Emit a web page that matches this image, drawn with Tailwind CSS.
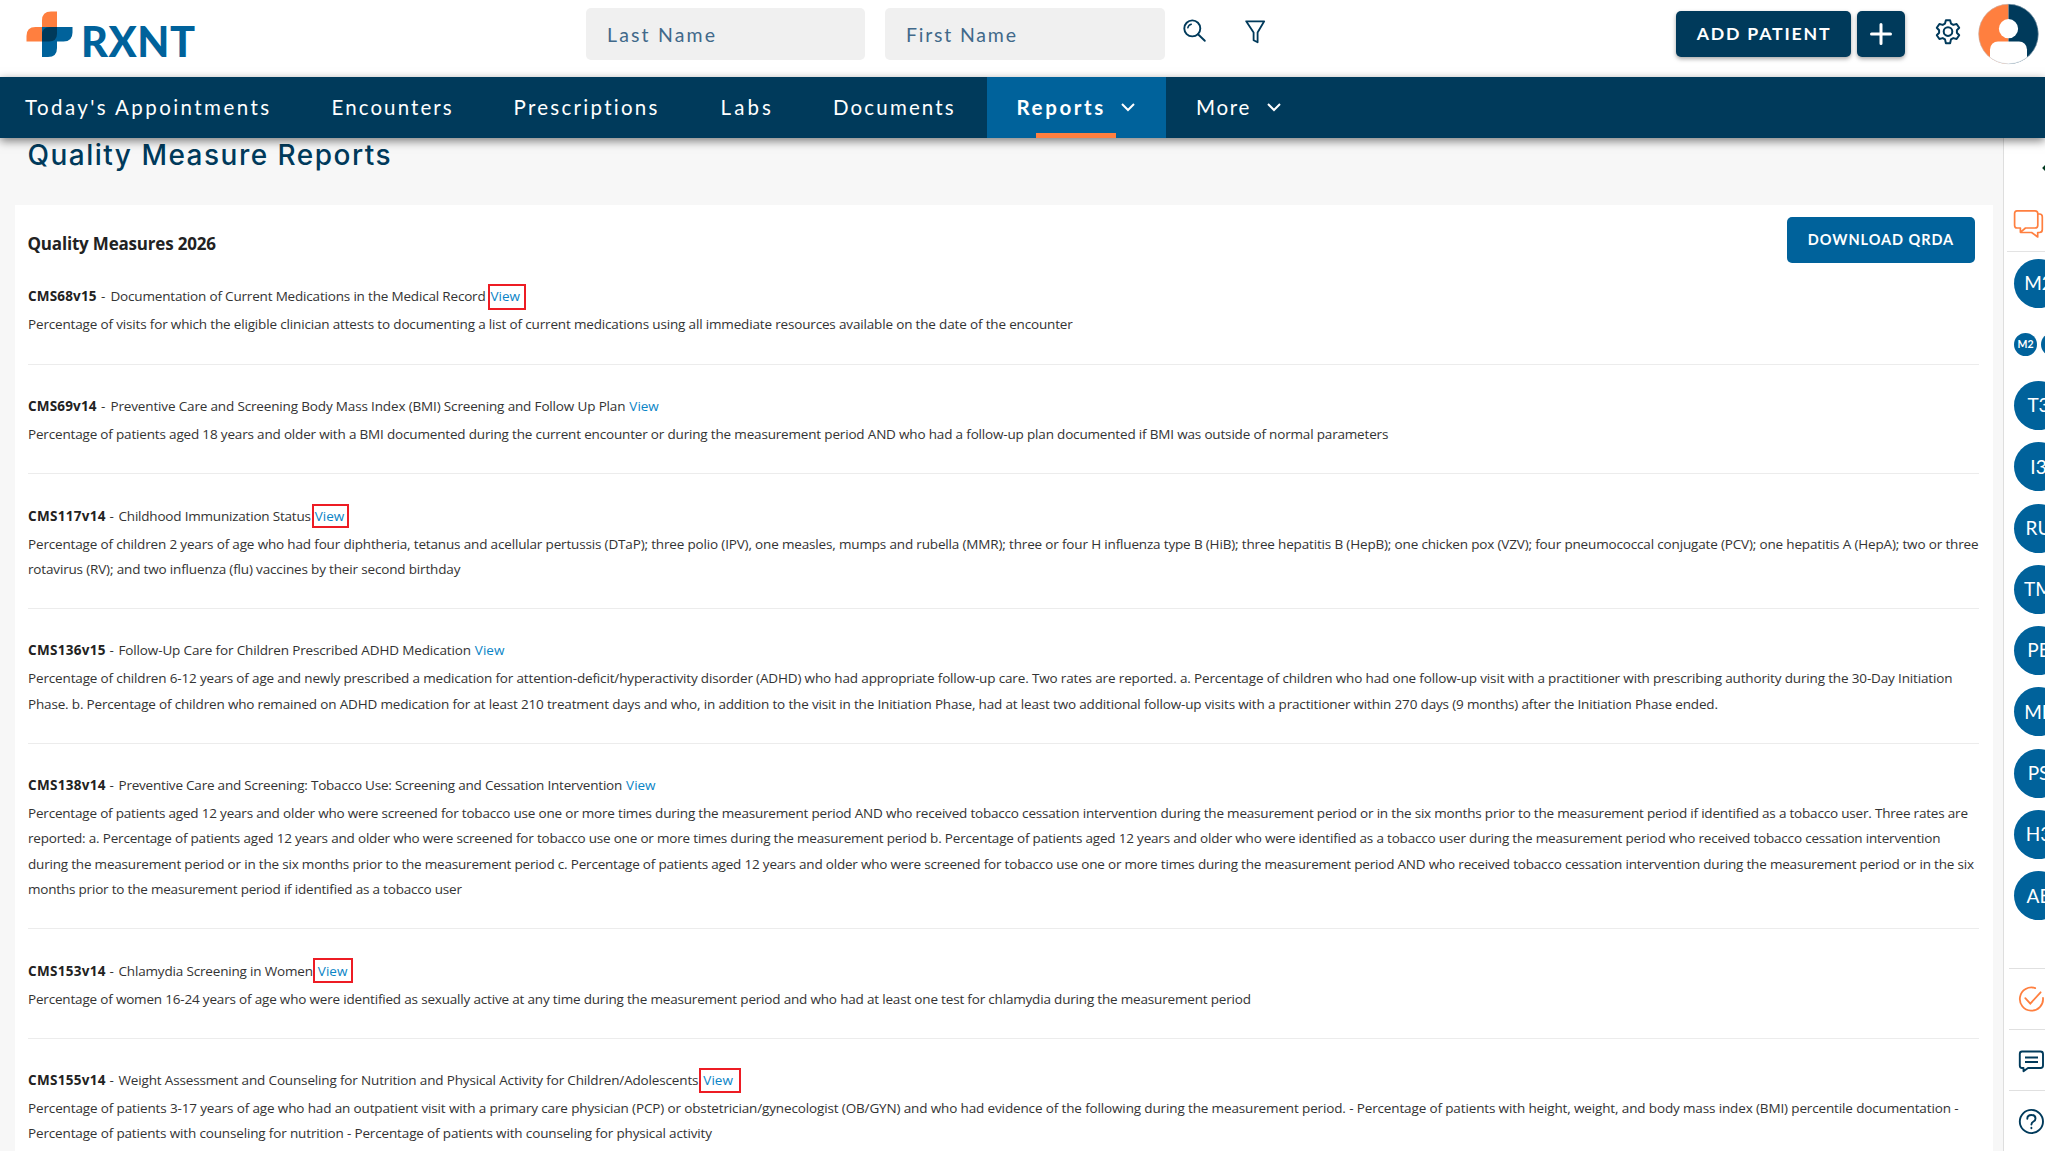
<!DOCTYPE html>
<html lang="en">
<head>
<meta charset="utf-8">
<title>RXNT - Quality Measure Reports</title>
<script src="https://cdn.jsdelivr.net/npm/@tailwindcss/browser@4"></script>
</head>
<body class="h-[1151px] w-[2045px] overflow-hidden bg-white font-['Lato',sans-serif] text-[#003a5b]">
<div class="flex h-[1151px] w-[2045px] flex-col overflow-hidden">

  <header class="flex h-[77px] shrink-0 items-start">
    <svg class="mt-2 ml-6 shrink-0 overflow-visible" width="180" height="60" viewBox="24 8 180 60">
      <path d="M57 11.5V41.5H26.5V36Q26.500 27 35.5 27H42V20.500Q42 11.500 51 11.500Z" fill="#ff7f3f"/>
      <path d="M42 57V27H72.500V32.500Q72.500 41.500 63.500 41.500H57V48Q57 57 48 57Z" fill="#00629b"/>
      <path d="M42 41.500V35Q42 27 50 27H57V33.500Q57 41.500 49 41.500Z" fill="#003a5b"/>
      <text x="81" y="57" textLength="114" lengthAdjust="spacing" class="font-['Lato',sans-serif] text-[41.5px] font-black" fill="#00629b">RXNT</text>
    </svg>
    <div class="mt-2 ml-[382px] flex h-[52px] w-[279px] shrink-0 items-center rounded-[5px] bg-[#f0f0f0] pt-px pl-[21px] text-[19.5px] tracking-[2.15px] text-[#41698a]">Last Name</div>
    <div class="mt-2 ml-5 flex h-[52px] w-[280px] shrink-0 items-center rounded-[5px] bg-[#f0f0f0] pt-px pl-[21px] text-[19.5px] tracking-[1.8px] text-[#41698a]">First Name</div>
    <svg class="mt-[19px] ml-[18px] shrink-0" width="25" height="25" viewBox="0 0 25 25" fill="none" stroke="#003a5b" stroke-width="1.900" stroke-linecap="round">
      <circle cx="9.300" cy="9.400" r="8"/><path d="M15 15.200L21.800 21.800"/><path d="M4.800 8.800Q5.400 6 8.300 5.200" stroke-width="1.500"/>
    </svg>
    <svg class="mt-[19px] ml-[37px] shrink-0" width="22" height="26" viewBox="0 0 22 26" fill="none" stroke="#003a5b" stroke-width="1.800" stroke-linejoin="round">
      <path d="M1.200 2.300H19.200L12.600 13.500V23.300L8.600 21.200V13.500Z"/>
    </svg>
    <div class="mt-[11px] ml-[408.5px] flex h-[46px] w-[175px] shrink-0 items-center justify-center rounded-[5px] bg-[#003a5b] pl-0.5 text-[17.7px] font-bold tracking-[1.8px] text-white shadow-[0_2px_4px_rgba(0,0,0,0.35)]">ADD PATIENT</div>
    <div class="mt-[11px] ml-[6.5px] flex h-[46px] w-12 shrink-0 items-center justify-center rounded-[5px] bg-[#003a5b] shadow-[0_2px_4px_rgba(0,0,0,0.35)]">
      <svg width="22" height="22" viewBox="0 0 22 22" stroke="#fff" stroke-width="3" stroke-linecap="round"><path d="M11 1.500V20.500M1.500 11H20.500"/></svg>
    </div>
    <svg class="mt-[19px] ml-[30px] shrink-0" width="26" height="26" viewBox="0 0 26 26" fill="none" stroke="#003a5b" stroke-width="2" stroke-linejoin="round">
      <path d="M10.900 1.300H15.100L16 4.600L18.300 5.900L21.600 5L24.200 8.800L21.900 11.300V13.700L24.200 16.200L21.600 20L18.300 19.100L16 20.400L15.100 24.300H10.900L10 20.400L7.700 19.100L4.400 20L1.800 16.200L4.100 13.700V11.300L1.800 8.800L4.400 5L7.700 5.900L10 4.600Z"/>
      <circle cx="13" cy="12.600" r="4.300"/>
    </svg>
    <svg class="mt-[3px] ml-[17px] shrink-0" width="62" height="62" viewBox="0 0 62 62">
      <defs><clipPath id="disc"><circle cx="30.500" cy="31" r="30"/></clipPath></defs>
      <g clip-path="url(#disc)">
        <rect width="30.500" height="62" fill="#ff7f3f"/><rect x="30.500" width="32" height="62" fill="#003a5b"/>
        <circle cx="30.500" cy="25.700" r="9.600" fill="#fff"/><rect x="12" y="38.500" width="37" height="34" rx="8" fill="#fff"/>
      </g>
      <circle cx="30.500" cy="31" r="29.800" fill="none" stroke="#b9c4ce" stroke-width=".5"/>
    </svg>
  </header>

  <nav class="relative z-10 flex h-[60.5px] shrink-0 items-stretch bg-[#003a5b] text-[20.5px] whitespace-nowrap text-white shadow-[0_3px_9px_rgba(0,0,0,0.5)]">
    <div class="flex w-[301.5px] items-center pl-[25px] tracking-[2.43px]">Today's Appointments</div>
    <div class="flex w-[182px] items-center pl-[30px] tracking-[2.1px]">Encounters</div>
    <div class="flex w-[207px] items-center pl-[30px] tracking-[2.28px]">Prescriptions</div>
    <div class="flex w-[112.5px] items-center pl-[30px] tracking-[3.1px]">Labs</div>
    <div class="flex w-[183.5px] items-center pl-[30px] tracking-[2.15px]">Documents</div>
    <div class="relative flex w-[179.5px] items-center bg-[#00629b] pl-[30px] font-bold tracking-[2.6px]">Reports
      <svg class="ml-[15px]" width="14" height="10" viewBox="0 0 14 10" fill="none" stroke="#fff" stroke-width="2"><path d="M1 2L7 8L13 2"/></svg>
      <div class="absolute bottom-0 left-[49.5px] h-[5px] w-20 bg-[#ff7f3f]"></div>
    </div>
    <div class="flex items-center pl-[30px] tracking-[1.7px]">More
      <svg class="ml-4" width="14" height="10" viewBox="0 0 14 10" fill="none" stroke="#fff" stroke-width="2"><path d="M1 2L7 8L13 2"/></svg>
    </div>
  </nav>

  <div class="-mt-[0.5px] flex h-[1014px] overflow-hidden">
    <main class="w-[2003px] shrink-0 bg-[#f7f7f7]">
      <h1 class="h-9 pl-[27.5px] font-['Inter',sans-serif] text-[28px] leading-9 font-medium tracking-[1.48px]">Quality Measure Reports</h1>
      <section class="mt-8 ml-[15px] h-[960px] w-[1978px] bg-white pr-[14px] pl-[13px] font-['Open_Sans',sans-serif] text-[13.5px] leading-[25.2px] whitespace-nowrap text-[#333]">
        <div class="flex h-[50.2px] items-start justify-between">
          <h2 class="mt-[27px] -ml-[0.5px] text-[17px] leading-6 font-bold tracking-[-0.19px] text-[#222]">Quality Measures 2026</h2>
          <div class="mt-3 mr-1 flex h-[46px] w-[188px] items-center justify-center rounded-[5px] bg-[#00629b] font-['Lato',sans-serif] text-[14.5px] font-bold tracking-[0.95px] text-white">DOWNLOAD QRDA</div>
        </div>

        <article class="h-[109.6px] border-b border-[#ececec] pt-[28.9px]">
          <div class="flex h-7"><b class="w-[73px] tracking-[0.17px] text-[#222]">CMS68v15</b><span class="w-[9.5px]">-</span><span class="tracking-[-0.18px]">Documentation of Current Medications in the Medical Record</span><a class="relative ml-[5px] text-[#0a84c6]">View<i class="absolute -top-[0.5px] -left-[3px] h-[26px] w-[38px] border-2 border-[#ed1c24]"></i></a></div>
          <p class="tracking-[-0.162px]">Percentage of visits for which the eligible clinician attests to documenting a list of current medications using all immediate resources available on the date of the encounter</p>
        </article>

        <article class="h-[109.6px] border-b border-[#ececec] pt-[29px]">
          <div class="flex h-7"><b class="w-[73px] tracking-[0.17px] text-[#222]">CMS69v14</b><span class="w-[9.5px]">-</span><span class="tracking-[-0.154px]">Preventive Care and Screening Body Mass Index (BMI) Screening and Follow Up Plan</span><a class="ml-1 text-[#0a84c6]">View</a></div>
          <p class="tracking-[-0.173px]">Percentage of patients aged 18 years and older with a BMI documented during the current encounter or during the measurement period AND who had a follow-up plan documented if BMI was outside of normal parameters</p>
        </article>

        <article class="h-[134.8px] border-b border-[#ececec] pt-[29.2px]">
          <div class="flex h-7"><b class="w-[81.5px] tracking-[0.3px] text-[#222]">CMS117v14</b><span class="w-[9px]">-</span><span class="tracking-[-0.2px]">Childhood Immunization Status</span><a class="relative ml-1 text-[#0a84c6]">View<i class="absolute top-0 -left-[3px] h-6 w-[37px] border-2 border-[#ed1c24]"></i></a></div>
          <p class="tracking-[-0.1616px]">Percentage of children 2 years of age who had four diphtheria, tetanus and acellular pertussis (DTaP); three polio (IPV), one measles, mumps and rubella (MMR); three or four H influenza type B (HiB); three hepatitis B (HepB); one chicken pox (VZV); four pneumococcal conjugate (PCV); one hepatitis A (HepA); two or three</p>
          <p class="tracking-[-0.16px]">rotavirus (RV); and two influenza (flu) vaccines by their second birthday</p>
        </article>

        <article class="h-[134.8px] border-b border-[#ececec] pt-[29.2px]">
          <div class="flex h-7"><b class="w-[81.5px] tracking-[0.3px] text-[#222]">CMS136v15</b><span class="w-[9px]">-</span><span class="tracking-[-0.136px]">Follow-Up Care for Children Prescribed ADHD Medication</span><a class="ml-1 text-[#0a84c6]">View</a></div>
          <p class="tracking-[-0.151px]">Percentage of children 6-12 years of age and newly prescribed a medication for attention-deficit/hyperactivity disorder (ADHD) who had appropriate follow-up care. Two rates are reported. a. Percentage of children who had one follow-up visit with a practitioner with prescribing authority during the 30-Day Initiation</p>
          <p class="tracking-[-0.1674px]">Phase. b. Percentage of children who remained on ADHD medication for at least 210 treatment days and who, in addition to the visit in the Initiation Phase, had at least two additional follow-up visits with a practitioner within 270 days (9 months) after the Initiation Phase ended.</p>
        </article>

        <article class="h-[185.4px] border-b border-[#ececec] pt-[29.2px]">
          <div class="flex h-7"><b class="w-[81.5px] tracking-[0.3px] text-[#222]">CMS138v14</b><span class="w-[9px]">-</span><span class="tracking-[-0.21px]">Preventive Care and Screening: Tobacco Use: Screening and Cessation Intervention</span><a class="ml-1 text-[#0a84c6]">View</a></div>
          <p class="tracking-[-0.1955px]">Percentage of patients aged 12 years and older who were screened for tobacco use one or more times during the measurement period AND who received tobacco cessation intervention during the measurement period or in the six months prior to the measurement period if identified as a tobacco user. Three rates are</p>
          <p class="tracking-[-0.1908px]">reported: a. Percentage of patients aged 12 years and older who were screened for tobacco use one or more times during the measurement period b. Percentage of patients aged 12 years and older who were identified as a tobacco user during the measurement period who received tobacco cessation intervention</p>
          <p class="tracking-[-0.1952px]">during the measurement period or in the six months prior to the measurement period c. Percentage of patients aged 12 years and older who were screened for tobacco use one or more times during the measurement period AND who received tobacco cessation intervention during the measurement period or in the six</p>
          <p class="tracking-[-0.1975px]">months prior to the measurement period if identified as a tobacco user</p>
        </article>

        <article class="h-[109.6px] border-b border-[#ececec] pt-[29.2px]">
          <div class="flex h-7"><b class="w-[81.5px] tracking-[0.3px] text-[#222]">CMS153v14</b><span class="w-[9px]">-</span><span class="tracking-[-0.17px]">Chlamydia Screening in Women</span><a class="relative ml-[5px] text-[#0a84c6]">View<i class="absolute -top-[0.5px] -left-[5px] h-[25px] w-10 border-2 border-[#ed1c24]"></i></a></div>
          <p class="tracking-[-0.183px]">Percentage of women 16-24 years of age who were identified as sexually active at any time during the measurement period and who had at least one test for chlamydia during the measurement period</p>
        </article>

        <article class="pt-[29.2px]">
          <div class="flex h-7"><b class="w-[81.5px] tracking-[0.3px] text-[#222]">CMS155v14</b><span class="w-[9px]">-</span><span class="tracking-[-0.155px]">Weight Assessment and Counseling for Nutrition and Physical Activity for Children/Adolescents</span><a class="relative ml-[5px] text-[#0a84c6]">View<i class="absolute top-0 -left-[4px] h-[25px] w-[42px] border-2 border-[#ed1c24]"></i></a></div>
          <p class="tracking-[-0.1367px]">Percentage of patients 3-17 years of age who had an outpatient visit with a primary care physician (PCP) or obstetrician/gynecologist (OB/GYN) and who had evidence of the following during the measurement period. - Percentage of patients with height, weight, and body mass index (BMI) percentile documentation -</p>
          <p class="tracking-[-0.1473px]">Percentage of patients with counseling for nutrition - Percentage of patients with counseling for physical activity</p>
        </article>
      </section>
    </main>

    <aside class="flex w-[74px] shrink-0 flex-col border-l border-[#dedede] bg-white text-[19px] text-white">
      <svg class="mt-6 ml-[38px] shrink-0" width="14" height="14" viewBox="0 0 14 14" fill="none" stroke="#00391f" stroke-width="2"><path d="M7 1L1.500 7L7 13M2 7H13"/></svg>
      <svg class="mt-[34px] ml-[9px] shrink-0" width="32" height="30" viewBox="0 0 32 30" fill="none" stroke="#ff7f3f" stroke-width="1.700" stroke-linejoin="round">
        <path d="M4 1.800H22Q24.800 1.800 24.800 4.600V16.200Q24.800 19 22 19H12.500L7.400 23.300V19H4Q1.600 19 1.600 16.200V4.600Q1.600 1.800 4 1.800Z"/>
        <path d="M24.800 5H26.500Q29.300 5 29.300 7.800V20.500Q29.300 23.500 26.500 23.500H24.700V28L18.600 23.500H7.800"/>
      </svg>
      <div class="mt-3 ml-[3px] h-px shrink-0 bg-[#e3e3e3]"></div>
      <div class="mt-[7px] ml-2.5 flex size-[49px] shrink-0 items-center justify-center rounded-full bg-[#00629b]">M2</div>
      <div class="mt-[25px] ml-2.5 flex shrink-0 gap-1 text-[10.5px] font-bold"><span class="flex size-[23px] shrink-0 items-center justify-center rounded-full bg-[#00629b]">M2</span><span class="size-[23px] shrink-0 rounded-full bg-[#00629b]"></span></div>
      <div class="mt-[25px] ml-2.5 flex shrink-0 flex-col gap-[12.3px]">
        <div class="flex size-[49px] items-center justify-center rounded-full bg-[#00629b]">T3</div>
        <div class="flex size-[49px] items-center justify-center rounded-full bg-[#00629b]">I3</div>
        <div class="flex size-[49px] items-center justify-center rounded-full bg-[#00629b]">RU</div>
        <div class="flex size-[49px] items-center justify-center rounded-full bg-[#00629b]">TM</div>
        <div class="flex size-[49px] items-center justify-center rounded-full bg-[#00629b]">PE</div>
        <div class="flex size-[49px] items-center justify-center rounded-full bg-[#00629b]">ME</div>
        <div class="flex size-[49px] items-center justify-center rounded-full bg-[#00629b]">PS</div>
        <div class="flex size-[49px] items-center justify-center rounded-full bg-[#00629b]">H3</div>
        <div class="flex size-[49px] items-center justify-center rounded-full bg-[#00629b]">AE</div>
      </div>
      <div class="mt-12 ml-[5px] flex h-[61px] shrink-0 items-center border-t border-[#e0e0e0] pl-[9px]">
        <svg width="27" height="27" viewBox="0 0 27 27" fill="none" stroke="#ff7f3f" stroke-width="1.800" stroke-linecap="round"><path d="M17.200 2.100A11.600 11.600 0 1 0 25 12M7.300 12.200L12.300 17.600L22.600 6.300"/></svg>
      </div>
      <div class="ml-[5px] flex h-[61px] shrink-0 items-center border-t border-[#e0e0e0] pl-[9px]">
        <svg width="27" height="27" viewBox="0 0 27 27" fill="none" stroke="#003a5b" stroke-width="1.900" stroke-linejoin="round"><path d="M4 4.500H22.500Q25 4.500 25 7V18.500Q25 21 22.500 21H10L5.500 24.300V21H4Q1.800 21 1.800 18.500V7Q1.800 4.500 4 4.500ZM7 10.500H20M7 15H20"/></svg>
      </div>
      <div class="ml-[5px] flex h-[61px] shrink-0 items-center border-t border-[#e0e0e0] pl-[9px]">
        <svg width="27" height="27" viewBox="0 0 27 27" fill="none" stroke="#003a5b" stroke-width="1.900" stroke-linecap="round"><circle cx="13.400" cy="13.500" r="11.600"/><path d="M9.300 10.700Q9.300 7 13.400 7T17.500 10.500Q17.500 12.500 15.500 13.500T13.400 16.500M13.400 19.800V20.200"/></svg>
      </div>
    </aside>
  </div>
</div>
</body>
</html>
